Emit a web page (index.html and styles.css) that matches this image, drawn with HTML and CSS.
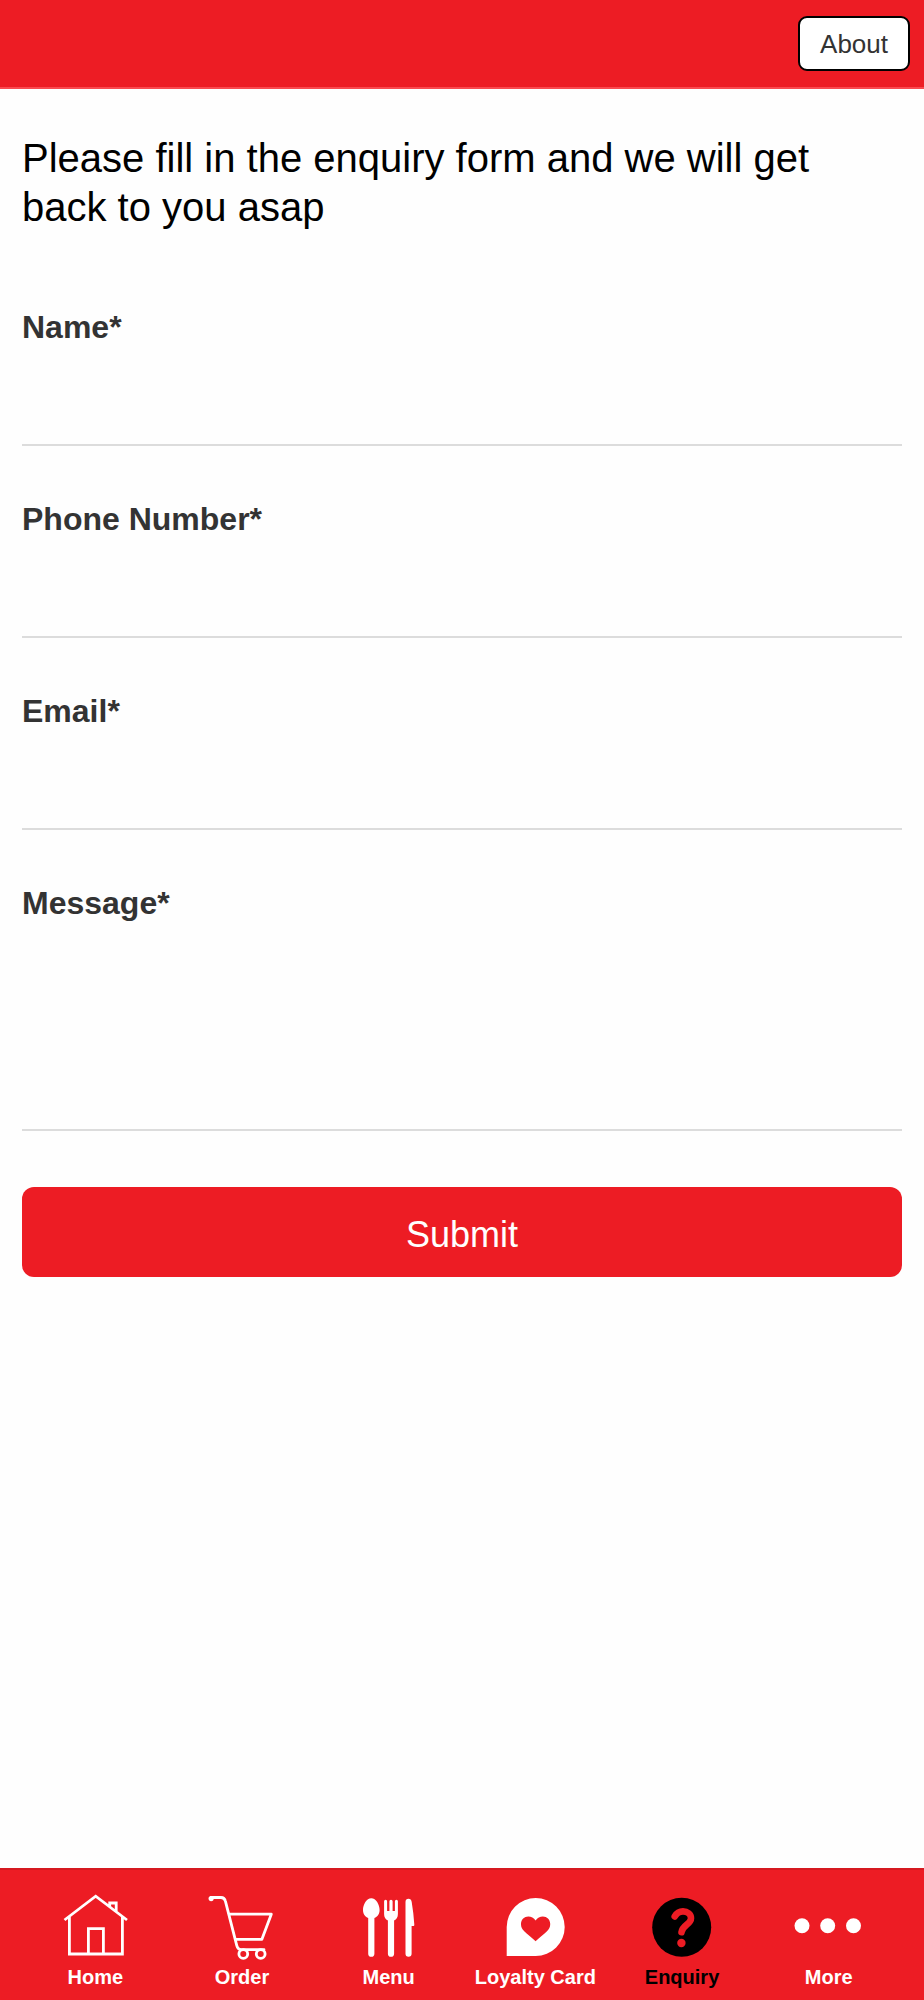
FILE: index.html
```html
<!DOCTYPE html>
<html lang="en">
<head>
<meta charset="utf-8">
<meta name="viewport" content="width=device-width, initial-scale=1">
<title>Enquiry</title>
<link rel="stylesheet" href="styles.css">
</head>
<body>
<div class="app">
  <header class="topbar">
    <button class="about" type="button">About</button>
  </header>

  <main class="content">
    <h1 class="intro">Please fill in the enquiry form and we will get back to you asap</h1>
    <form class="form">
      <div class="field">
        <label class="label" for="name">Name*</label>
        <input class="control" id="name" name="name" type="text" required>
      </div>
      <div class="field">
        <label class="label" for="phone">Phone Number*</label>
        <input class="control" id="phone" name="phone" type="tel" required>
      </div>
      <div class="field">
        <label class="label" for="email">Email*</label>
        <input class="control" id="email" name="email" type="email" required>
      </div>
      <div class="field">
        <label class="label" for="message">Message*</label>
        <textarea class="control control-tall" id="message" name="message" required></textarea>
      </div>
      <button class="submit" type="submit">Submit</button>
    </form>
  </main>

  <nav class="tabs" aria-label="Main">
    <a class="tab" href="#home">
      <svg class="icon" viewBox="0 0 72 72" fill="none" stroke="currentColor" stroke-width="2.8" aria-hidden="true">
        <path d="M5.5 30 36.700 6.200 68 30M10.400 27v37h53V27M29.400 64V38.700h15V64M50.700 16.500v-3.500h6.500v9"/>
      </svg>
      Home
    </a>
    <a class="tab" href="#order">
      <svg class="icon" viewBox="0 0 72 72" fill="none" stroke="currentColor" stroke-width="2.8" stroke-linejoin="round" stroke-linecap="round" aria-hidden="true">
        <path d="M5 7.500h10c2.600 0 3.800 1 4.400 3.600l11.400 44.500c.7 2.800 2 4.100 4.500 4.100H58M23.300 24.200h42l-9.400 25.100H29.800"/>
        <circle cx="5.100" cy="8.600" r="1.200" fill="currentColor"/>
        <circle cx="37.300" cy="64" r="4.400"/>
        <circle cx="54.700" cy="64" r="4.400"/>
      </svg>
      Order
    </a>
    <a class="tab" href="#menu">
      <svg class="icon" viewBox="0 0 72 72" fill="currentColor" aria-hidden="true">
        <path d="M18.300 8.200c4.700 0 8.300 6.300 8.300 11.800 0 4.200-2.100 6.600-5.200 8v35.700a3.100 3.100 0 0 1-6.200 0V28c-3.100-1.400-5.200-3.800-5.200-8 0-5.500 3.600-11.800 8.300-11.800z"/>
        <path d="M31.100 11.200a1.500 1.500 0 0 1 3 0V21h2.300v-9.700a1.600 1.600 0 0 1 3.200 0V21h2.300v-9.800a1.500 1.500 0 0 1 3 0V24c0 3.500-1.300 5.200-3.800 6.500v33.200a3.100 3.100 0 0 1-6.200 0V30.500c-2.500-1.300-3.800-3-3.800-6.500z"/>
        <path d="M52.500 12c0-2.200 1.200-3.300 2.900-3.300 2 0 2.900 1 3.300 3.300 1.300 7.500 2.100 15 2.600 22.600.1 1.100-.3 1.500-1.300 1.500h-1.400v27.600a3 3 0 0 1-6.100 0z"/>
      </svg>
      Menu
    </a>
    <a class="tab" href="#loyalty">
      <svg class="icon" viewBox="0 0 72 72" fill="currentColor" fill-rule="evenodd" aria-hidden="true">
        <path d="M7.700 66V37a29 29 0 1 1 29 29zM36.600 51.200C32.500 47.300 28.500 44.800 25.500 41.600c-2.600-2.800-3.600-5-3.500-7.800.2-4.300 3.300-7.200 7.300-7.200 3 0 5.500 1.300 7.300 3.900 1.800-2.600 4.300-3.900 7.300-3.900 4 0 7.100 2.900 7.300 7.200.1 2.800-.9 5-3.500 7.800-3 3.200-7 5.700-11.100 9.600z"/>
      </svg>
      Loyalty Card
    </a>
    <a class="tab tab-active" href="#enquiry" aria-current="page">
      <svg class="icon" viewBox="0 0 72 72" aria-hidden="true">
        <circle cx="35.700" cy="37.300" r="29.500" fill="currentColor"/>
        <path class="mark" d="M28.700 26.500c2-3.400 4.800-5.100 8.300-5.100 4.400 0 8 2.600 8 6.800 0 6.200-8.400 6.500-9.500 14"/>
        <circle class="mark-dot" cx="35.400" cy="53" r="4.200"/>
      </svg>
      Enquiry
    </a>
    <a class="tab" href="#more">
      <svg class="icon" viewBox="0 0 72 72" fill="currentColor" aria-hidden="true">
        <circle cx="9" cy="35.700" r="7.500"/>
        <circle cx="34.700" cy="35.700" r="7.500"/>
        <circle cx="60.500" cy="35.700" r="7.500"/>
      </svg>
      More
    </a>
  </nav>
</div>
</body>
</html>
```
FILE: styles.css
```css
* {
  box-sizing: border-box;
}

body {
  margin: 0;
  background: #fefefe;
  color: #333;
  font-family: "Liberation Sans", Arial, sans-serif;
}

.app {
  display: flex;
  flex-direction: column;
  min-height: 100vh;
}

.topbar {
  display: flex;
  justify-content: flex-end;
  padding: 16px 14px;
  background: #ed1c24;
  border-bottom: 2px solid #fa4a50;
}

.about {
  padding: 11px 20px 9px;
  border: 2px solid #000;
  border-radius: 9px;
  background: #fff;
  color: #333;
  font: 26px/31px "Liberation Sans", Arial, sans-serif;
}

.content {
  flex: 1;
  padding: 45px 22px;
}

.intro {
  margin: 0 0 76px;
  color: #000;
  font-size: 40px;
  font-weight: 400;
  line-height: 49px;
}

.field {
  display: flex;
  flex-direction: column;
  margin-bottom: 54px;
}

.label {
  font-size: 32px;
  font-weight: 700;
  line-height: 38px;
}

.control {
  width: 100%;
  height: 100px;
  padding: 16px 0;
  border: 0;
  border-bottom: 2px solid #dcdcdc;
  border-radius: 0;
  outline: 0;
  background: transparent;
  color: #333;
  font: 32px/38px "Liberation Sans", Arial, sans-serif;
  resize: none;
}

.control-tall {
  height: 209px;
}

.submit {
  width: 100%;
  margin-top: 2px;
  padding: 27px 20px 21px;
  border: 0;
  border-radius: 12px;
  background: #ed1c24;
  color: #fff;
  font: 36px/42px "Liberation Sans", Arial, sans-serif;
}

.tabs {
  display: flex;
  padding: 20px 22px 11px;
  border-top: 2px solid #d51920;
  background: #ed1c24;
}

.tab {
  display: flex;
  flex: 1 1 0;
  flex-direction: column;
  align-items: center;
  gap: 3px;
  color: #fff;
  font-size: 20px;
  font-weight: 700;
  line-height: 24px;
  text-decoration: none;
  white-space: nowrap;
}

.tab-active {
  color: #000;
}

.icon {
  width: 72px;
  height: 72px;
}

.mark {
  fill: none;
  stroke: #ed1c24;
  stroke-width: 6.6;
  stroke-linecap: round;
}

.mark-dot {
  fill: #ed1c24;
}
```
